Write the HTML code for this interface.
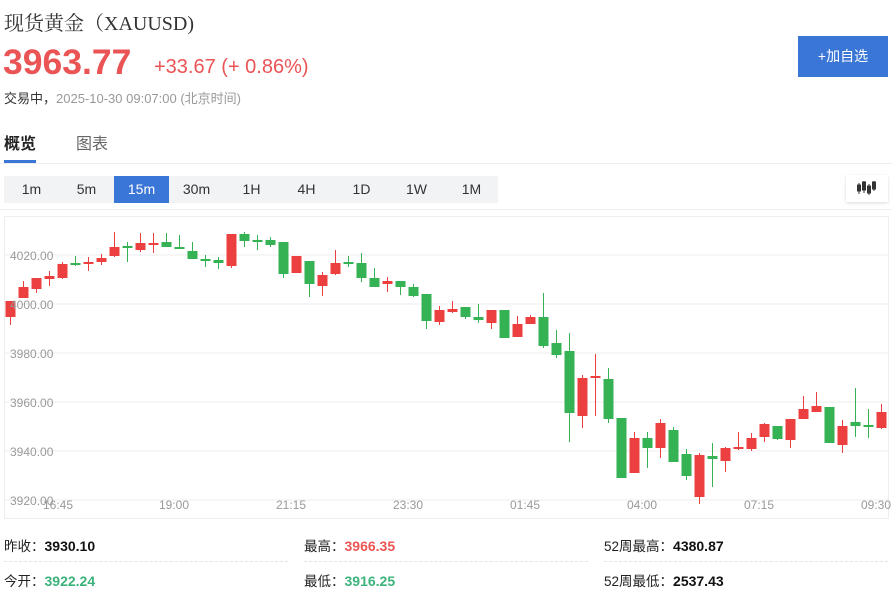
<!DOCTYPE html>
<html><head><meta charset="utf-8"><style>
body{margin:0;width:892px;height:593px;background:#fff;font-family:"Liberation Sans","Noto Sans CJK SC",sans-serif;position:relative;overflow:hidden;color:#333}
.a{position:absolute;white-space:nowrap}
.iv{position:absolute;top:176px;height:27px;line-height:27px;font-size:14px;color:#333;text-align:center;width:55px}
.lbl{font-size:13.5px;color:#222}
.lbl b{font-size:14px}
.dash{position:absolute;top:561px;height:0;border-top:1px dashed #e4e4e4}
</style></head><body>
<div class="a" style="left:4px;top:7px;font-size:20px;color:#333;font-family:'Liberation Serif','Noto Serif CJK SC',serif">现货黄金（XAUUSD)</div>
<div class="a" style="left:3px;top:42px;font-size:35.5px;font-weight:bold;color:#ea5455">3963.77</div>
<div class="a" style="left:154px;top:56px;font-size:20px;color:#ea5455">+33.67 (+ 0.86%)</div>
<div class="a" style="left:4px;top:88px;font-size:13px;color:#333">交易中，<span style="color:#999">2025-10-30 09:07:00 (北京时间)</span></div>
<div class="a" style="left:798px;top:36px;width:90px;height:41px;background:#3a76d6;color:#fff;font-size:14px;line-height:41px;text-align:center">+加自选</div>
<div class="a" style="left:4px;top:130px;font-size:16px;font-weight:bold;color:#222">概览</div>
<div class="a" style="left:76px;top:130px;font-size:16px;color:#666">图表</div>
<div class="a" style="left:0;top:163px;width:892px;height:1px;background:#eee"></div>
<div class="a" style="left:4px;top:160px;width:32px;height:3px;background:#3a76d6"></div>
<div class="a" style="left:4px;top:176px;width:494px;height:27px;background:#f2f3f5"></div>
<div class="a" style="left:114px;top:176px;width:55px;height:27px;background:#3a76d6"></div>
<div class="iv" style="left:4px">1m</div><div class="iv" style="left:59px">5m</div><div class="iv" style="left:114px;color:#fff">15m</div><div class="iv" style="left:169px">30m</div><div class="iv" style="left:224px">1H</div><div class="iv" style="left:279px">4H</div><div class="iv" style="left:334px">1D</div><div class="iv" style="left:389px">1W</div><div class="iv" style="left:444px">1M</div>
<div class="a" style="left:846px;top:175px;width:42px;height:27px;background:#fff;box-shadow:0 1px 3px rgba(0,0,0,.15)">
<svg width="42" height="27"><g fill="#333" stroke="#333" stroke-width="1"><line x1="13" y1="8" x2="13" y2="19"/><rect x="11.5" y="10" width="3" height="6"/><line x1="18" y1="6" x2="18" y2="18"/><rect x="16.5" y="7" width="3" height="8"/><line x1="23" y1="9" x2="23" y2="20"/><rect x="21.5" y="11" width="3" height="7"/><line x1="28" y1="6" x2="28" y2="16"/><rect x="26.5" y="7" width="3" height="7"/></g></svg></div>
<div class="a" style="left:0;top:209px;width:892px;height:1px;background:#f0f0f0"></div>
<svg class="a" style="left:0;top:0" width="892" height="593" font-family="Liberation Sans" font-size="12" fill="#999">
<rect x="4.5" y="216.5" width="884" height="302" fill="none" stroke="#eee"/>
<g stroke="#eee"><line x1="5" x2="888" y1="255" y2="255"/><line x1="5" x2="888" y1="304" y2="304"/><line x1="5" x2="888" y1="353" y2="353"/><line x1="5" x2="888" y1="402" y2="402"/><line x1="5" x2="888" y1="451" y2="451"/><line x1="5" x2="888" y1="500" y2="500"/></g>
<g id="c"></g>
<g fill="#999"><text x="10" y="260">4020.00</text><text x="10" y="309">4000.00</text><text x="10" y="358">3980.00</text><text x="10" y="407">3960.00</text><text x="10" y="456">3940.00</text><text x="10" y="505">3920.00</text>
<g text-anchor="middle"><text x="58" y="509">16:45</text><text x="174" y="509">19:00</text><text x="291" y="509">21:15</text><text x="408" y="509">23:30</text><text x="525" y="509">01:45</text><text x="642" y="509">04:00</text><text x="759" y="509">07:15</text><text x="876" y="509">09:30</text></g></g>
</svg>
<div class="a lbl" style="left:4px;top:535px">昨收：<b style="color:#111">3930.10</b></div>
<div class="a lbl" style="left:304px;top:535px">最高：<b style="color:#ea5455">3966.35</b></div>
<div class="a lbl" style="left:604px;top:535px">52周最高：<b style="color:#111">4380.87</b></div>
<div class="a lbl" style="left:4px;top:570px">今开：<b style="color:#3cb37a">3922.24</b></div>
<div class="a lbl" style="left:304px;top:570px">最低：<b style="color:#3cb37a">3916.25</b></div>
<div class="a lbl" style="left:604px;top:570px">52周最低：<b style="color:#111">2537.43</b></div>
<div class="dash" style="left:4px;width:284px"></div><div class="dash" style="left:304px;width:284px"></div><div class="dash" style="left:604px;width:284px"></div>
<script>
var d=[["r",301,317,301,325],["r",287,298,281,298],["r",278,289,278,293],["r",276,279,271,286],["r",264,278,262,279],["g",263,264,256,266],["r",262,264,257,271],["r",258,262,254,265],["r",247,256,232,257],["g",246,247,242,262],["r",243,250,233,252],["r",243,244,233,253],["g",242,247,233,247],["g",247,247,235,247],["g",251,259,242,259],["g",259,260,255,267],["g",260,263,257,269],["r",234,266,234,268],["g",234,241,232,247],["g",240,241,235,250],["g",240,245,237,247],["g",242,274,242,278],["r",256,273,256,273],["g",261,284,261,297],["r",275,286,272,296],["r",263,274,250,275],["g",262,263,256,267],["g",263,278,253,282],["g",278,287,268,287],["r",281,284,277,292],["g",281,287,281,295],["g",287,296,284,297],["g",294,321,294,329],["r",310,322,306,325],["r",309,312,301,313],["g",307,317,307,319],["g",317,320,304,323],["r",310,323,310,329],["g",310,338,310,338],["r",324,337,316,337],["r",317,324,315,324],["g",317,346,293,348],["g",343,355,330,358],["g",351,413,333,442],["r",378,416,375,428],["r",376,378,354,416],["g",379,419,368,423],["g",418,478,418,478],["r",438,473,432,473],["g",438,448,432,468],["r",423,448,419,458],["g",430,462,427,462],["g",454,476,449,480],["r",455,497,453,504],["g",456,459,443,487],["r",448,461,447,472],["r",447,449,432,450],["r",438,449,433,451],["r",424,437,423,442],["g",426,439,426,440],["r",419,440,419,448],["r",409,419,396,419],["r",406,412,392,412],["g",407,443,407,443],["r",426,445,420,453],["g",422,426,388,437],["g",425,427,409,438],["r",412,428,404,429]];
var s="";d.forEach(function(c,i){var x=10+i*13,col=c[0]=="r"?"#ec4040":"#35b254";var h=Math.max(c[2]-c[1],2);s+='<line x1="'+(x+.5)+'" x2="'+(x+.5)+'" y1="'+c[3]+'" y2="'+c[4]+'" stroke="'+col+'"/><rect x="'+(x-4.5)+'" y="'+c[1]+'" width="10" height="'+h+'" fill="'+col+'"/>';});
document.getElementById("c").innerHTML=s;
</script>
</body></html>
